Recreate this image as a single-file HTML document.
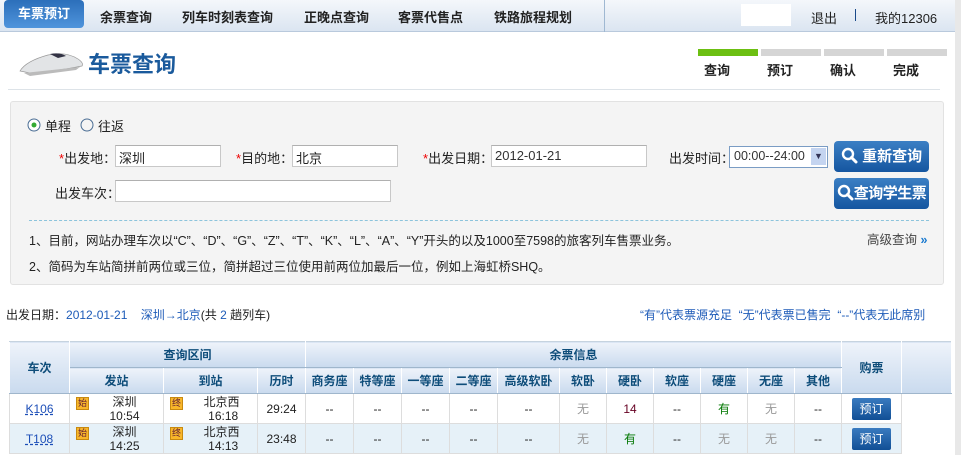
<!DOCTYPE html>
<html><head><meta charset="utf-8"><style>
*{margin:0;padding:0;box-sizing:border-box}
body{width:961px;height:455px;overflow:hidden;background:#fff;font-family:"Liberation Sans","Noto Sans CJK SC",sans-serif;font-size:12px;color:#222;position:relative}
.a{position:absolute;white-space:nowrap}
.nav{position:absolute;left:0;top:0;width:955px;height:32px;background:linear-gradient(#f4f7fb,#dbe5f1);border-bottom:1px solid #b9c9dc}
.nav .a{top:7px;font-weight:bold;font-size:13px;color:#222}
.act{left:4px;top:0!important;width:80px;height:28px;background:linear-gradient(#2c6fba,#4f94dc);border-radius:4px;color:#fff!important;text-align:center;line-height:28px}
.prog{position:absolute;top:49px;width:60px;height:7px;background:#d5d5d5}
.pl{top:60px;font-weight:bold;font-size:13px}
.panel{position:absolute;left:10px;top:101px;width:934px;height:184px;background:#f4f4f4;border:1px solid #e2e2e2;border-radius:3px}
.inp{position:absolute;height:22px;background:#fff;border:1px solid #c8c8c8;border-top-color:#b0b0b0;padding:2px 3px;font-size:13px}
.red{color:#e00}
.btn{position:absolute;left:834px;width:95px;height:31px;background:linear-gradient(#3b7fc4,#1556a0);border-radius:4px;color:#fff;font-weight:bold;font-size:15px;line-height:31px;text-align:center}
.btn svg{vertical-align:-3px}
table{position:absolute;left:9px;top:341px;width:942px;border-collapse:collapse;table-layout:fixed}
td,th{border:1px solid #c6d3df;text-align:center;font-size:12px}
th{background:linear-gradient(#eef3fa,#c9daee);color:#0e4d7a;font-weight:bold;height:26px;border-color:#c6d3df #fff #9fb6cc #fff}
td{height:30px;border-color:#ddd;font-size:12px;line-height:14px}
tr.r2 td{background:#e6f1f8}
.g{color:#999}.y{color:#070}
.tag{display:inline-block;width:13px;height:13px;background:#f8b62a;border:1px solid #c88a10;font-size:9px;line-height:11px;color:#623;text-align:center}
.bk{display:inline-block;width:39px;height:22px;background:linear-gradient(#3a7bc0,#114f95);color:#fff;border-radius:2px;line-height:22px;font-size:12px}
.lk{color:#1d4fb8;text-decoration:underline dashed}
.st{position:relative;padding-left:16px}
</style></head><body>
<div class="nav">
<div class="a act">车票预订</div>
<div class="a" style="left:100px">余票查询</div>
<div class="a" style="left:182px">列车时刻表查询</div>
<div class="a" style="left:304px">正晚点查询</div>
<div class="a" style="left:398px">客票代售点</div>
<div class="a" style="left:494px">铁路旅程规划</div>
<div class="a" style="left:604px;top:0;width:1px;height:32px;background:#9fb8d2"></div>
<div class="a" style="left:741px;top:4px;width:50px;height:22px;background:#fff"></div>
<div class="a" style="left:811px;top:8px;font-weight:normal">退出</div>
<div class="a" style="left:855px;top:9px;width:1px;height:12px;background:#1a4a8a"></div>
<div class="a" style="left:875px;top:8px;font-weight:normal">我的12306</div>
</div>
<div class="a" style="left:955px;top:0;width:6px;height:455px;background:#e8e8e8"></div>
<svg class="a" style="left:18px;top:47px" width="68" height="30"><path d="M2 24 Q8 14 30 8 Q48 4 60 12 Q66 16 64 19 Q40 24 12 26 Z" fill="#e2e4e6" stroke="#999" stroke-width="0.7"/><path d="M32 7 Q42 5 48 9 L40 11 Z" fill="#334"/><path d="M6 26 L62 20 L58 23 L12 29 Z" fill="#bbb"/></svg>
<div class="a" style="left:88px;top:47px;font-size:22px;font-weight:bold;color:#1a5a9c">车票查询</div>
<div class="a" style="left:8px;top:89px;width:932px;height:1px;background:#dde3e8"></div>
<div class="prog" style="left:698px;background:#6cbf12"></div>
<div class="prog" style="left:761px"></div>
<div class="prog" style="left:824px"></div>
<div class="prog" style="left:887px"></div>
<div class="a pl" style="left:704px">查询</div>
<div class="a pl" style="left:767px">预订</div>
<div class="a pl" style="left:830px">确认</div>
<div class="a pl" style="left:893px">完成</div>
<div class="panel"></div>
<svg class="a" style="left:27px;top:118px" width="14" height="14"><circle cx="7" cy="7" r="6" fill="#fff" stroke="#4a6d94"/><circle cx="7" cy="7" r="2.5" fill="#3a3"/></svg>
<div class="a" style="left:45px;top:116px;font-size:13px">单程</div>
<svg class="a" style="left:80px;top:118px" width="14" height="14"><circle cx="7" cy="7" r="6" fill="#f4f4f4" stroke="#4a6d94"/></svg>
<div class="a" style="left:98px;top:116px;font-size:13px">往返</div>
<div class="a" style="left:59px;top:148px;font-size:13px"><span class="red">*</span>出发地：</div>
<div class="inp" style="left:115px;top:145px;width:106px">深圳</div>
<div class="a" style="left:236px;top:148px;font-size:13px"><span class="red">*</span>目的地：</div>
<div class="inp" style="left:292px;top:145px;width:106px">北京</div>
<div class="a" style="left:423px;top:148px;font-size:13px"><span class="red">*</span>出发日期：</div>
<div class="inp" style="left:491px;top:145px;width:156px;color:#333">2012-01-21</div>
<div class="a" style="left:669px;top:148px;font-size:13px">出发时间：</div>
<div class="inp" style="left:729px;top:146px;width:99px;border-color:#7a9cc4;padding:2px 4px;color:#333;font-size:12.5px">00:00--24:00</div>
<div class="a" style="left:811px;top:148px;width:15px;height:17px;background:#c4d4f0;color:#335;font-size:9px;text-align:center;line-height:17px">▼</div>
<div class="btn" style="top:141px"><svg width="17" height="17"><circle cx="7" cy="7" r="5" fill="none" stroke="#fff" stroke-width="2.4"/><path d="M10.5 10.5 L15 15" stroke="#fff" stroke-width="3" stroke-linecap="round"/></svg> 重新查询</div>
<div class="btn" style="top:178px;letter-spacing:-0.5px"><svg width="17" height="17"><circle cx="7" cy="7" r="5" fill="none" stroke="#fff" stroke-width="2.4"/><path d="M10.5 10.5 L15 15" stroke="#fff" stroke-width="3" stroke-linecap="round"/></svg>查询学生票</div>
<div class="a" style="left:55px;top:183px;font-size:13px">出发车次：</div>
<div class="inp" style="left:115px;top:180px;width:276px"></div>
<div class="a" style="left:29px;top:220px;width:900px;border-top:1px dashed #8cc4dc"></div>
<div class="a" style="left:29px;top:230px;font-size:12.5px">1、目前，网站办理车次以“C”、“D”、“G”、“Z”、“T”、“K”、“L”、“A”、“Y”开头的以及1000至7598的旅客列车售票业务。</div>
<div class="a" style="left:867px;top:229px;font-size:12.5px;color:#444">高级查询 <span style="color:#1a7ad0;font-weight:bold">»</span></div>
<div class="a" style="left:29px;top:256px;font-size:12.5px">2、简码为车站简拼前两位或三位，简拼超过三位使用前两位加最后一位，例如上海虹桥SHQ。</div>
<div class="a" style="left:6px;top:306px">出发日期：<span style="color:#1d5bb8">2012-01-21</span>&nbsp;&nbsp;&nbsp; <span style="color:#1d5bb8">深圳→北京</span>(共 <span style="color:#1d5bb8">2</span> 趟列车)</div>
<div class="a" style="left:640px;top:306px;color:#1d5bb8">“有”代表票源充足&nbsp; “无”代表票已售完&nbsp; “--”代表无此席别</div>
<table>
<colgroup><col style="width:60px"><col style="width:94px"><col style="width:94px"><col style="width:48px"><col style="width:48px"><col style="width:48px"><col style="width:48px"><col style="width:48px"><col style="width:62px"><col style="width:47px"><col style="width:47px"><col style="width:47px"><col style="width:47px"><col style="width:47px"><col style="width:47px"><col style="width:60px"><col style="width:50px"></colgroup>
<tr><th rowspan="2">车次</th><th colspan="3">查询区间</th><th colspan="11">余票信息</th><th rowspan="2">购票</th><th rowspan="2"></th></tr>
<tr><th>发站</th><th>到站</th><th>历时</th><th>商务座</th><th>特等座</th><th>一等座</th><th>二等座</th><th>高级软卧</th><th>软卧</th><th>硬卧</th><th>软座</th><th>硬座</th><th>无座</th><th>其他</th></tr>
<tr><td><span class="lk">K106</span></td><td class="st"><span class="tag" style="position:absolute;left:6px;top:3px">始</span>深圳<br>10:54</td><td class="st" style="padding-left:22px"><span class="tag" style="position:absolute;left:6px;top:3px">终</span>北京西<br>&nbsp;16:18</td><td>29:24</td><td>--</td><td>--</td><td>--</td><td>--</td><td>--</td><td class="g">无</td><td style="color:#602">14</td><td>--</td><td class="y">有</td><td class="g">无</td><td>--</td><td><span class="bk">预订</span></td><td style="border:none"></td></tr>
<tr class="r2"><td><span class="lk">T108</span></td><td class="st"><span class="tag" style="position:absolute;left:6px;top:3px">始</span>深圳<br>14:25</td><td class="st" style="padding-left:22px"><span class="tag" style="position:absolute;left:6px;top:3px">终</span>北京西<br>&nbsp;14:13</td><td>23:48</td><td>--</td><td>--</td><td>--</td><td>--</td><td>--</td><td class="g">无</td><td class="y">有</td><td>--</td><td class="g">无</td><td class="g">无</td><td>--</td><td><span class="bk">预订</span></td><td style="border:none;background:#fff"></td></tr>
</table>
</body></html>
